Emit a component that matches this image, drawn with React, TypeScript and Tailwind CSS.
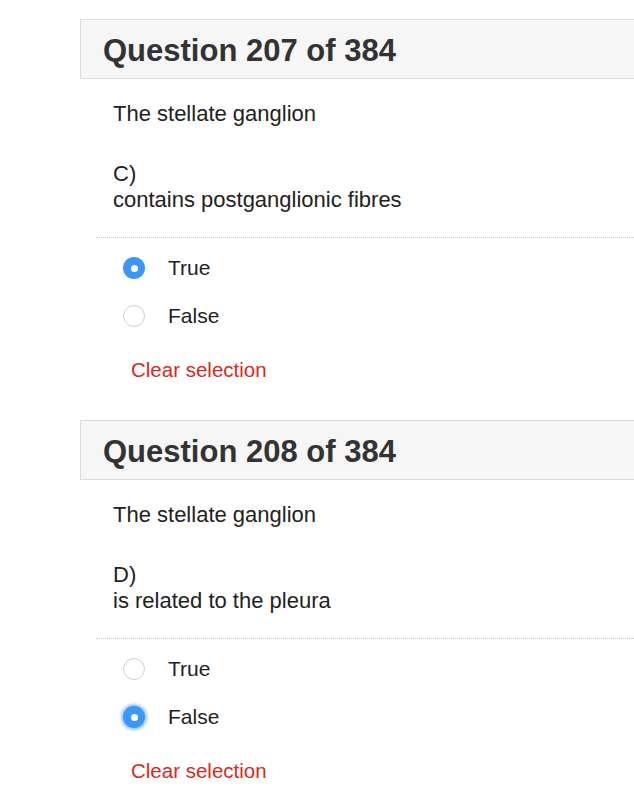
import React from "react";

type Question = {
  number: number;
  total: number;
  stem: string;
  letter: string;
  statement: string;
  answer: "True" | "False";
  focused?: boolean;
};

const questions: Question[] = [
  {
    number: 207,
    total: 384,
    stem: "The stellate ganglion",
    letter: "C)",
    statement: "contains postganglionic fibres",
    answer: "True",
  },
  {
    number: 208,
    total: 384,
    stem: "The stellate ganglion",
    letter: "D)",
    statement: "is related to the pleura",
    answer: "False",
    focused: true,
  },
];

function Radio({ checked, focused }: { checked: boolean; focused?: boolean }) {
  if (checked) {
    return (
      <span
        className={
          "flex h-[22px] w-[22px] items-center justify-center rounded-full bg-[#3a97fb] " +
          (focused ? "shadow-[0_0_3px_2px_rgba(58,151,251,0.55)]" : "")
        }
      >
        <span className="h-[7px] w-[7px] rounded-full bg-white" />
      </span>
    );
  }
  return (
    <span className="block h-[22px] w-[22px] rounded-full border-[1.5px] border-[#cfcfcf] bg-white" />
  );
}

function QuestionBlock({ q, first }: { q: Question; first?: boolean }) {
  return (
    <section className={first ? "" : "mt-[37px]"}>
      {/* Header */}
      <div className="flex h-[60px] items-center border border-r-0 border-[#dcdcdc] bg-[#f6f6f6] pl-[22px] pt-[3px]">
        <h2 className="text-[31px] font-bold leading-[1.15] text-[#333]">
          Question {q.number} of {q.total}
        </h2>
      </div>

      {/* Question text */}
      <div className="pl-[33px] text-[22px] leading-[26px] text-[#222]">
        <p className="mt-[22px]">{q.stem}</p>
        <p className="mt-[34px]">
          {q.letter}
          <br />
          {q.statement}
        </p>
      </div>

      <div className="ml-[16px] mt-[24px] border-t border-dotted border-[#c4c4c4]" />

      {/* Options */}
      <div className="mt-[6px] pl-[43px]">
        {(["True", "False"] as const).map((opt) => (
          <div key={opt} className="flex h-[48px] items-center">
            <Radio checked={q.answer === opt} focused={q.focused} />
            <span className="ml-[23px] text-[21px] leading-[26px] text-[#222]">
              {opt}
            </span>
          </div>
        ))}
      </div>

      <div className="mt-[17px] pl-[51px] text-[20.5px] leading-[26px] text-[#d8281a]">
        Clear selection
      </div>
    </section>
  );
}

export default function App() {
  return (
    <div
      className="min-h-screen w-full overflow-hidden bg-white pt-[19px]"
      style={{ fontFamily: '"Liberation Sans", Arial, Helvetica, sans-serif' }}
    >
      <div className="ml-[80px] w-[600px]">
        {questions.map((q, i) => (
          <QuestionBlock key={q.number} q={q} first={i === 0} />
        ))}
      </div>
    </div>
  );
}
